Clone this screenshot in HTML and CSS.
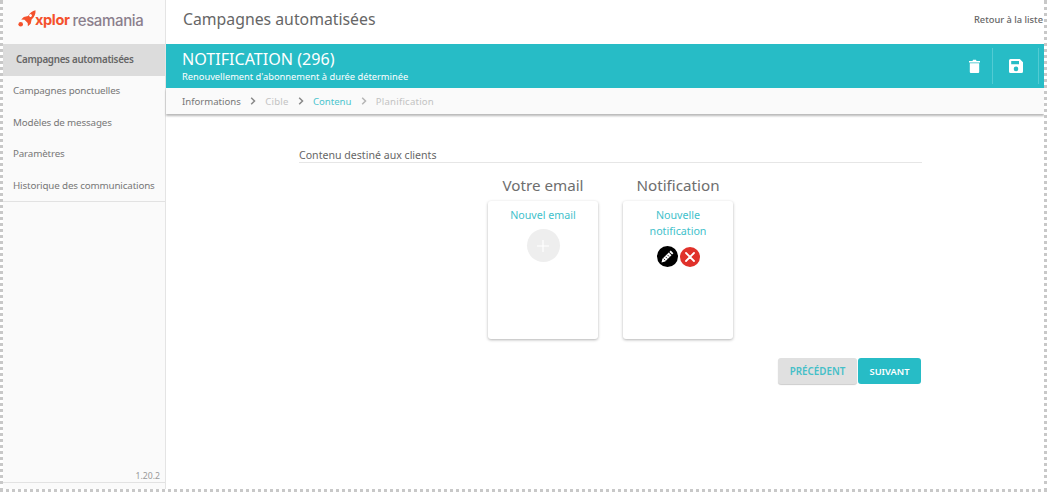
FILE: index.html
```html
<!DOCTYPE html>
<html lang="fr">
<head>
<meta charset="utf-8">
<title>Campagnes automatisées</title>
<link rel="stylesheet" href="styles.css">
</head>
<body>
<div class="frame">
  <aside class="sidebar">
    <div class="logo">
      <svg class="rocket" width="18" height="18" viewBox="0 0 18 18"><path fill="#f4512c" d="M17.500.3c.3 3.800-1 6.800-3.900 9.100l-.9 4.400-2.800 2.500-.2-3.200-3.200-3.300-3.300-.2 2.600-2.700 4.300-.8C11.800 3.300 14.200 1 17.500.3z"/><path fill="#fff" d="M11.500 4.600a1.400 1.400 0 1 0 2 2 1.400 1.400 0 0 0-2-2z"/><circle cx="2.700" cy="14.300" r="2.300" fill="#f4512c"/></svg>
      <span class="logo-x">xplor</span><span class="logo-r">resamania</span>
    </div>
    <nav class="nav">
      <a class="nav-item active">Campagnes automatisées</a>
      <a class="nav-item">Campagnes ponctuelles</a>
      <a class="nav-item">Modèles de messages</a>
      <a class="nav-item">Paramètres</a>
      <a class="nav-item">Historique des communications</a>
    </nav>
    <div class="version">1.20.2</div>
  </aside>
  <main class="main">
    <header class="topbar">
      <h1 class="page-title">Campagnes automatisées</h1>
      <a class="back">Retour à la liste</a>
    </header>
    <section class="banner">
      <div class="banner-text">
        <div class="banner-title">NOTIFICATION (296)</div>
        <div class="banner-sub">Renouvellement d'abonnement à durée déterminée</div>
      </div>
      <div class="banner-actions">
        <span class="action trash">
          <svg width="11" height="14" viewBox="0 0 11 14"><path fill="#fff" d="M0 2h3.500l.5-1.200h3L7.500 2H11v1.500H0zM.8 4.300h9.400V13a1 1 0 0 1-1 1H1.800a1 1 0 0 1-1-1z"/></svg>
        </span>
        <span class="action">
          <svg width="14" height="14" viewBox="0 0 14 14"><path fill="#fff" fill-rule="evenodd" d="M1.500 0h9.300L14 3.200v9.300a1.500 1.500 0 0 1-1.500 1.500h-11A1.500 1.500 0 0 1 0 12.500v-11A1.500 1.500 0 0 1 1.500 0zM2.200 2v3.300h7.800V2zM7 7.600a2.300 2.300 0 1 0 0 4.600 2.300 2.300 0 0 0 0-4.600z"/></svg>
        </span>
      </div>
    </section>
    <div class="crumbs">
      <span class="crumb done">Informations</span>
      <svg class="chev" width="6" height="8" viewBox="0 0 6 8"><path fill="none" stroke="#888" stroke-width="1.500" d="M1.200.8L4.500 4 1.200 7.200"/></svg>
      <span class="crumb muted">Cible</span>
      <svg class="chev" width="6" height="8" viewBox="0 0 6 8"><path fill="none" stroke="#888" stroke-width="1.500" d="M1.200.8L4.500 4 1.200 7.200"/></svg>
      <span class="crumb current">Contenu</span>
      <svg class="chev" width="6" height="8" viewBox="0 0 6 8"><path fill="none" stroke="#b5b5b5" stroke-width="1.500" d="M1.200.8L4.500 4 1.200 7.200"/></svg>
      <span class="crumb muted">Planification</span>
    </div>
    <section class="content">
      <h2 class="section-title">Contenu destiné aux clients</h2>
      <div class="cards">
        <div class="col">
          <h3 class="col-title">Votre email</h3>
          <div class="card">
            <a class="card-link">Nouvel email</a>
            <div class="add"><svg width="14" height="14" viewBox="0 0 14 14"><path stroke="#fff" stroke-width="1.200" d="M7 1v12M1 7h12"/></svg></div>
          </div>
        </div>
        <div class="col">
          <h3 class="col-title">Notification</h3>
          <div class="card">
            <a class="card-link">Nouvelle notification</a>
            <div class="tools">
              <span class="tool edit"><svg width="13" height="13" viewBox="0 0 13 13"><path fill="#fff" d="M9.700.6l2.700 2.700-1.300 1.300-2.700-2.700zM7.800 2.500l2.700 2.700-6.300 6.300-3.700.9.900-3.700z"/><path stroke="#000" stroke-width=".8" d="M2.700 8.700l1.600 1.600M4.600 6.800l1.600 1.600M6.500 4.900l1.600 1.600"/></svg></span>
              <span class="tool del"><svg width="12" height="12" viewBox="0 0 12 12"><path stroke="#fff" stroke-width="1.800" stroke-linecap="round" d="M2 2l8 8M10 2l-8 8"/></svg></span>
            </div>
          </div>
        </div>
      </div>
      <div class="buttons">
        <button class="btn prev">PRÉCÉDENT</button>
        <button class="btn next">SUIVANT</button>
      </div>
    </section>
  </main>
</div>
</body>
</html>
```
FILE: styles.css
```css
* { box-sizing: border-box; }
html, body { margin: 0; padding: 0; background: #fff; }
body { font-family: "Noto Sans", "Open Sans", sans-serif; color: #666; }
.frame {
  display: flex;
  width: 1047px;
  height: 492px;
  border-left: 3px dotted #c8c8c8;
  border-right: 3px dotted #c8c8c8;
  border-bottom: 3px dotted #c8c8c8;
  overflow: hidden;
}
.sidebar {
  width: 163px;
  flex: none;
  display: flex;
  flex-direction: column;
  background: #fafafa;
  border-right: 1px solid #e4e4e4;
}
.logo { height: 44px; display: flex; align-items: center; padding: 0 0 4px 15px; background: #fafafa; }
.rocket { margin: -2px -1px 0 0; }
.logo-x { font: 700 14.600px/1 "Inter", sans-serif; color: #f4512c; letter-spacing: -.4px; margin-right: 3px; }
.logo-r { font: 500 15px/1 "Inter", sans-serif; color: #8b7f8d; letter-spacing: -.35px; }
.nav { display: flex; flex-direction: column; height: 158px; flex: none; border-bottom: 1px solid #e2e2e2; }
.nav-item {
  height: 31.500px;
  flex: none;
  display: flex;
  align-items: center;
  padding: 0 0 1px 10px;
  font-size: 9.800px;
  letter-spacing: -.15px;
  white-space: nowrap;
  color: #777;
}
.nav-item.active { background: #dcdcdc; padding-left: 13px; font-weight: 600; color: #666; letter-spacing: -.28px; }
.version {
  margin-top: auto;
  height: 20px;
  margin-bottom: 6px;
  padding: 6px 5px 0 0;
  text-align: right;
  font-size: 8.700px;
  line-height: 14px;
  color: #999;
  border-bottom: 1px solid #e2e2e2;
}
.main { flex: 1; min-width: 0; display: flex; flex-direction: column; }
.topbar { height: 44px; flex: none; display: flex; align-items: center; justify-content: space-between; padding: 0 1px 6px 17px; }
.page-title { margin: 0; font-size: 15.800px; font-weight: 400; color: #666; }
.back { font-size: 9.300px; font-weight: 500; color: #666; }
.banner { height: 44px; flex: none; display: flex; align-items: center; justify-content: space-between; background: #27bcc6; color: #fff; padding-left: 16px; }
.banner-text { margin-top: -1px; }
.banner-title { font-size: 16.100px; line-height: 20px; }
.banner-sub { font-size: 9.300px; line-height: 13px; margin-top: 1px; }
.banner-actions { display: flex; height: 36px; padding-right: 5px; }
.action { width: 46px; display: flex; align-items: center; justify-content: center; border-right: 1px solid #52cbd3; }
.action.trash { width: 36px; }
.crumbs {
  height: 26px; flex: none;
  display: flex; align-items: center;
  gap: 9.200px;
  padding-left: 16px;
  background: #fafafa;
  box-shadow: 0 2px 2px rgba(0,0,0,.28);
  font-size: 9.600px;
  position: relative;
}
.crumb.done { color: #777; }
.crumb.muted { color: #c3c3c3; letter-spacing: .2px; }
.crumb.current { color: #4cc5ce; }
.chev { flex: none; }
.content { width: 623px; margin-left: 133px; padding-top: 34px; }
.section-title { margin: 0; height: 15px; font-size: 10.600px; line-height: 14px; font-weight: 400; color: #666; border-bottom: 1px solid #e6e6e6; }
.cards { display: flex; gap: 25px; padding-left: 189px; margin-top: 12px; }
.col { width: 110px; }
.col-title { margin: 0; height: 26px; text-align: center; font-size: 15.200px; line-height: 20px; font-weight: 400; color: #6e6e6e; white-space: nowrap; }
.card {
  height: 138px;
  background: #fff;
  border-radius: 3px;
  box-shadow: 0 1px 3px rgba(0,0,0,.3);
  padding: 6px 10px 0;
  text-align: center;
}
.card-link { display: block; font-size: 10.700px; line-height: 16px; color: #3fc1cb; }
.add { width: 33px; height: 33px; margin: 6px auto 0; border-radius: 50%; background: #eee; display: flex; align-items: center; justify-content: center; }
.tools { display: flex; justify-content: center; gap: 2px; margin-top: 7px; }
.tool { width: 21px; height: 21px; border-radius: 50%; display: flex; align-items: center; justify-content: center; }
.tool.edit { background: #000; }
.tool.del { background: #e0312a; width: 20px; height: 20px; margin-top: .5px; }
.buttons { display: flex; justify-content: flex-end; gap: 1px; padding-right: 1px; margin-top: 19px; }
.btn { height: 26px; border: 0; border-radius: 3px; font-family: "Noto Sans", sans-serif; font-size: 9.800px; font-weight: 600; padding: 0; }
.btn.prev { width: 79px; background: #e0e0e0; color: #45bfc8; box-shadow: 0 1px 1px rgba(0,0,0,.2); }
.btn.next { width: 63px; background: #27bcc6; color: #fff; font-weight: 600; font-size: 9.300px; }
```
